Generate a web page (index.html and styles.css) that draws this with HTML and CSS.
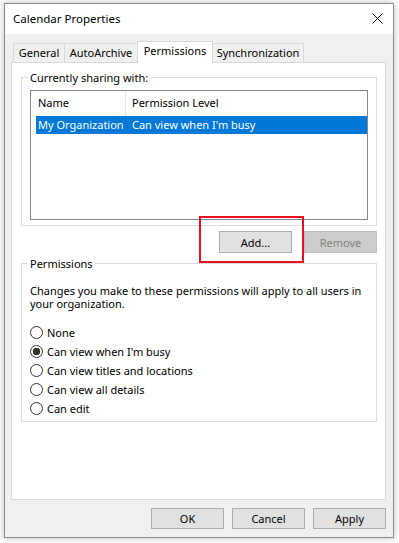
FILE: index.html
```html
<!DOCTYPE html>
<html lang="en">
<head>
<meta charset="UTF-8">
<meta name="viewport" content="width=device-width, initial-scale=1.0">
<title>Calendar Properties</title>
<link rel="stylesheet" href="styles.css">
</head>
<body>
<div class="dialog">
    <div class="titlebar">
        <span class="title">Calendar Properties</span>
        <svg class="close" width="11" height="11" viewBox="0 0 11 11">
            <path d="M0.5 0.5L10.5 10.5M10.5 0.5L0.5 10.5" stroke="#000" stroke-width="1" fill="none"/>
        </svg>
    </div>
    <div class="content">
        <div class="tabs">
            <div class="tab tab-general">General</div>
            <div class="tab tab-archive">AutoArchive</div>
            <div class="tab tab-perms active">Permissions</div>
            <div class="tab tab-sync">Synchronization</div>
        </div>
        <div class="panel">
            <fieldset class="group group-sharing">
                <legend>Currently sharing with:</legend>
                <div class="listview">
                    <div class="list-header">
                        <div class="col col-name">Name</div>
                        <div class="col col-level">Permission Level</div>
                    </div>
                    <div class="list-row selected">
                        <div class="cell cell-name">My Organization</div>
                        <div class="cell">Can view when I'm busy</div>
                    </div>
                </div>
            </fieldset>
            <div class="button-row">
                <button class="btn">Add...</button>
                <button class="btn" disabled>Remove</button>
            </div>
            <div class="highlight"></div>
            <fieldset class="group group-perms">
                <legend>Permissions</legend>
                <p class="note">Changes you make to these permissions will apply to all users in your organization.</p>
                <label class="radio"><input type="radio" name="level"> None</label>
                <label class="radio"><input type="radio" name="level" checked> Can view when I'm busy</label>
                <label class="radio"><input type="radio" name="level"> Can view titles and locations</label>
                <label class="radio"><input type="radio" name="level"> Can view all details</label>
                <label class="radio"><input type="radio" name="level"> Can edit</label>
            </fieldset>
        </div>
        <div class="footer">
            <button class="btn">OK</button>
            <button class="btn">Cancel</button>
            <button class="btn">Apply</button>
        </div>
    </div>
</div>
</body>
</html>
```

FILE: styles.css
```css
body {
    margin: 0;
    width: 399px;
    height: 543px;
    overflow: hidden;
    background-color: #fff;
    font-family: "Noto Sans", "Open Sans", sans-serif;
    font-size: 11px;
    color: #000;
}
.dialog {
    box-sizing: border-box;
    width: 390px;
    height: 535px;
    margin: 3px 0 0 4px;
    border: 1px solid #8a8a8a;
    background-color: #f0f0f0;
    box-shadow: 0 0 7px rgba(0, 0, 0, 0.28);
}
.titlebar {
    height: 30px;
    background-color: #fff;
    display: flex;
    align-items: center;
    justify-content: space-between;
    padding: 0 10px 0 8px;
}
.title {
    font-size: 11.5px;
    line-height: 16px;
}
.close {
    display: block;
    margin-top: -1px;
}
.content {
    padding: 7px 7px 0 6px;
}
.tabs {
    display: flex;
    align-items: flex-end;
    height: 21px;
    padding-left: 2px;
}
.tab {
    box-sizing: border-box;
    height: 19px;
    border: 1px solid #d9d9d9;
    border-bottom: none;
    margin-left: -1px;
    background-color: #f0f0f0;
    text-align: center;
    line-height: 18px;
}
.tab-general {
    width: 52px;
    margin-left: 0;
}
.tab-archive {
    width: 74px;
}
.tab-perms {
    width: 76px;
}
.tab-sync {
    width: 92px;
}
.tab.active {
    position: relative;
    z-index: 1;
    height: 22px;
    margin-bottom: -1px;
    background-color: #fff;
    line-height: 18px;
}
.panel {
    position: relative;
    box-sizing: border-box;
    height: 438px;
    border: 1px solid #d9d9d9;
    background-color: #fff;
}
.group {
    margin: 0 8px 0 9px;
    border: 1px solid #dcdcdc;
    padding: 0 8px 5px 8px;
}
.group legend {
    padding: 0 2px;
    margin-left: -2px;
    line-height: 15px;
}
.group-sharing {
    margin-top: 7px;
}
.listview {
    box-sizing: border-box;
    height: 130px;
    margin-top: 5px;
    border: 1px solid #828790;
}
.list-header {
    display: flex;
    height: 25px;
}
.col {
    line-height: 24px;
}
.col-name {
    box-sizing: border-box;
    width: 95px;
    padding-left: 7px;
    border-right: 1px solid #e5e5e5;
}
.col-level {
    padding-left: 6px;
}
.list-row {
    display: flex;
    height: 18px;
    margin-left: 5px;
    line-height: 17px;
}
.list-row.selected {
    background-color: #0078d7;
    color: #fff;
}
.cell {
    padding-left: 2px;
}
.cell-name {
    box-sizing: border-box;
    width: 94px;
}
.button-row {
    display: flex;
    justify-content: flex-end;
    gap: 12px;
    margin: 5px 8px 0 0;
}
.btn {
    box-sizing: border-box;
    width: 73px;
    height: 22px;
    padding: 0;
    border: 1px solid #adadad;
    background-color: #e1e1e1;
    font-family: inherit;
    font-size: 11px;
    color: #000;
}
.btn:disabled {
    border-color: #bfbfbf;
    background-color: #cccccc;
    color: #838383;
}
.highlight {
    position: absolute;
    left: 187px;
    top: 153px;
    box-sizing: border-box;
    width: 105px;
    height: 47px;
    border: 2px solid #e81123;
}
.group-perms {
    margin-top: 3px;
    padding-bottom: 3px;
}
.note {
    margin: 13px 0 13px 0;
    line-height: 13px;
}
.radio {
    display: flex;
    align-items: center;
    height: 19px;
}
.radio input {
    appearance: none;
    -webkit-appearance: none;
    box-sizing: border-box;
    width: 13px;
    height: 13px;
    margin: 0 4px 0 0;
    border: 1px solid #333;
    border-radius: 50%;
    background-color: #fff;
}
.radio input:checked {
    background: radial-gradient(circle, #333 0, #333 3.5px, #fff 4px);
}
.footer {
    display: flex;
    justify-content: flex-end;
    gap: 8px;
    margin-top: 8px;
}
.footer .btn {
    height: 21px;
}
```
